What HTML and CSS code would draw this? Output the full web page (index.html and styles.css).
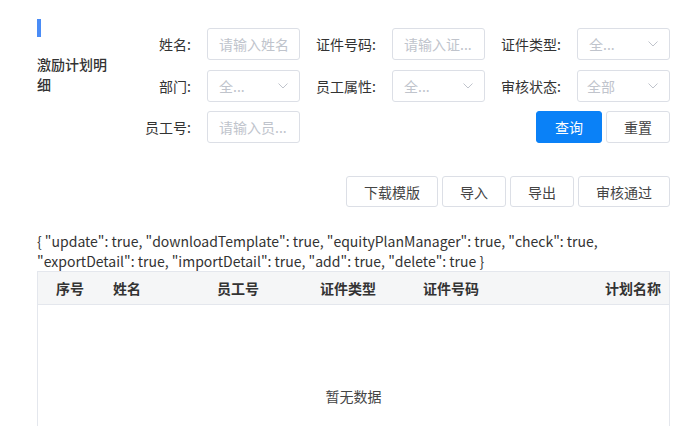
FILE: index.html
```html
<!DOCTYPE html>
<html lang="zh-CN">
<head>
<meta charset="utf-8">
<title>激励计划明细</title>
<link rel="stylesheet" href="styles.css">
</head>
<body>
<div class="page">
  <div class="top">
    <div class="side">
      <div class="bar"></div>
      <div class="title">激励计划明细</div>
    </div>
    <div class="form">
      <label class="lbl">姓名:</label>
      <div class="input ph">请输入姓名</div>
      <label class="lbl">证件号码:</label>
      <div class="input ph">请输入证...</div>
      <label class="lbl">证件类型:</label>
      <div class="input select"><span class="ph">全...</span><svg class="arrow" width="10" height="6" viewBox="0 0 10 6"><path d="M0.5 0.5 L5 5 L9.5 0.5" fill="none" stroke="#c0c4cc" stroke-width="1"/></svg></div>

      <label class="lbl">部门:</label>
      <div class="input select"><span class="ph">全...</span><svg class="arrow" width="10" height="6" viewBox="0 0 10 6"><path d="M0.5 0.5 L5 5 L9.5 0.5" fill="none" stroke="#c0c4cc" stroke-width="1"/></svg></div>
      <label class="lbl">员工属性:</label>
      <div class="input select"><span class="ph">全...</span><svg class="arrow" width="10" height="6" viewBox="0 0 10 6"><path d="M0.5 0.5 L5 5 L9.5 0.5" fill="none" stroke="#c0c4cc" stroke-width="1"/></svg></div>
      <label class="lbl">审核状态:</label>
      <div class="input select tight"><span class="ph">全部</span><svg class="arrow" width="10" height="6" viewBox="0 0 10 6"><path d="M0.5 0.5 L5 5 L9.5 0.5" fill="none" stroke="#c0c4cc" stroke-width="1"/></svg></div>

      <label class="lbl">员工号:</label>
      <div class="input ph">请输入员...</div>
      <div class="actions">
        <button class="btn primary">查询</button>
        <button class="btn">重置</button>
      </div>
    </div>
  </div>

  <div class="toolbar">
    <button class="btn wide">下载模版</button>
    <button class="btn">导入</button>
    <button class="btn">导出</button>
    <button class="btn wide">审核通过</button>
  </div>

  <div class="perm">{ "update": true, "downloadTemplate": true, "equityPlanManager": true, "check": true, "exportDetail": true, "importDetail": true, "add": true, "delete": true }</div>

  <div class="table">
    <div class="thead">
      <div class="th c1">序号</div>
      <div class="th">姓名</div>
      <div class="th">员工号</div>
      <div class="th">证件类型</div>
      <div class="th">证件号码</div>
      <div class="th last">计划名称</div>
    </div>
    <div class="empty">暂无数据</div>
  </div>
</div>
</body>
</html>
```

FILE: styles.css
```css
* { box-sizing: border-box; }
html, body { margin: 0; background: #fff; }
body {
  font-family: "Noto Sans CJK SC", "Noto Sans", sans-serif;
  font-size: 14px;
  line-height: 20px;
  color: #333;
}
.page { padding: 0 25px 0 37px; }
.top { display: flex; }
.side { width: 78px; padding-top: 19px; }
.bar { width: 4px; height: 18px; background: #4a8cf6; }
.title { margin-top: 17px; font-weight: 500; font-size: 14px; color: #333; width: 72px; }
.form {
  margin-top: 28px;
  display: grid;
  grid-template-columns: 92px 93px 92px 93px 92px 93px;
  grid-auto-rows: 32px;
  row-gap: 9.5px;
}
.lbl {
  display: flex; align-items: center; justify-content: flex-end;
  padding-right: 16px; color: #333;
}
.input {
  border: 1px solid #dcdfe6; border-radius: 3px;
  display: flex; align-items: center; padding: 0 11px;
  white-space: nowrap; overflow: hidden;
}
.input.tight { padding-left: 9px; }
.ph { color: #c0c4cc; }
.select { justify-content: space-between; }
.arrow { display: block; flex: none; }
.actions {
  grid-column: 5 / 7;
  display: flex; justify-content: flex-end; gap: 4px;
}
.btn {
  font: inherit; height: 32px; padding: 0 17px;
  border: 1px solid #dcdfe6; border-radius: 3px;
  background: #fff; color: #444; cursor: pointer;
  width: 64px;
}
.btn.wide { width: 92px; }
.btn.primary { background: #0a81f7; border-color: #0a81f7; color: #fff; width: 66px; }
.toolbar {
  margin-top: 33px;
  display: flex; justify-content: flex-end; gap: 4px;
}
.toolbar .btn { height: 31px; }
.perm { margin-top: 24px; color: #333; }
.table { border: 1px solid #e4e7ed; border-bottom: none; }
.thead {
  display: grid;
  grid-template-columns: 75px 104px 103px 103px 1fr 1fr;
  height: 33px; align-items: center;
  background: #f5f6f7; border-bottom: 1px solid #e4e7ed;
}
.th { font-weight: 700; color: #333; }
.th.c1 { padding-left: 18px; }
.th.last { text-align: right; padding-right: 8px; }
.empty { text-align: center; padding-top: 81px; height: 121px; color: #444; }
```
